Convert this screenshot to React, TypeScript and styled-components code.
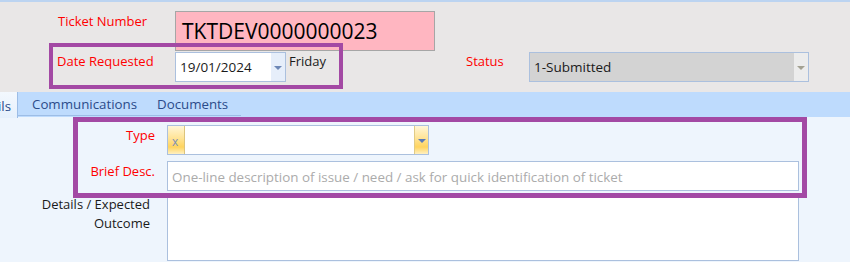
import React from "react";
import styled, { createGlobalStyle } from "styled-components";

const GlobalStyle = createGlobalStyle`
  html, body {
    margin: 0;
    padding: 0;
    background: #eef5fd;
  }
  body {
    font-family: "Open Sans", "Noto Sans", "DejaVu Sans", sans-serif;
    font-size: 13px;
    color: #1a1a1a;
  }
`;

const TicketForm: React.FC = () => {
  return (
    <Page>
      <Header>
        <TopRow>
          <FieldLabel $width={117} $offset={1}>Ticket Number</FieldLabel>
          <TicketBox>TKTDEV0000000023</TicketBox>
        </TopRow>
        <SecondRow>
          <Highlight $border={4}>
            <DateGroup>
              <FieldLabel $width={118} $offset={5}>Date Requested</FieldLabel>
              <DateInput>
                <InputText>19/01/2024</InputText>
                <DropButton $bg="#e6eefa">
                  <Arrow $color="#6d87b6" />
                </DropButton>
              </DateInput>
              <DayName>Friday</DayName>
            </DateGroup>
          </Highlight>
          <StatusLabel $width={63} $offset={9}>
            Status
          </StatusLabel>
          <StatusCombo>
            <InputText>1-Submitted</InputText>
            <DropButton $bg="#ececec">
              <Arrow $color="#a3a192" />
            </DropButton>
          </StatusCombo>
        </SecondRow>
      </Header>

      <TabStrip>
        <ActiveTab>
          <span>Details</span>
        </ActiveTab>
        <TabGroup>
          <Tab>Communications</Tab>
          <Tab>Documents</Tab>
        </TabGroup>
      </TabStrip>

      <Panel>
        <Highlight $border={5} $overlap>
          <FormGrid>
            <GridLabel>Type</GridLabel>
            <TypeCombo>
              <ClearCell>x</ClearCell>
              <TypeValue />
              <YellowDrop>
                <Arrow $color="#5b7bb8" />
              </YellowDrop>
            </TypeCombo>
            <GridLabel>Brief Desc.</GridLabel>
            <TextBox>
              <Placeholder>
                One-line description of issue / need / ask for quick identification of ticket
              </Placeholder>
            </TextBox>
          </FormGrid>
        </Highlight>
        <DetailsRow>
          <DetailsLabel>
            Details / Expected
            <br />
            Outcome
          </DetailsLabel>
          <TextArea />
        </DetailsRow>
      </Panel>
    </Page>
  );
};

export default function App() {
  return (
    <>
      <GlobalStyle />
      <TicketForm />
    </>
  );
}

// Styled Components
const Page = styled.div`
  width: 850px;
  height: 262px;
  overflow: hidden;
  background: #eef5fd;
`;

const Header = styled.div`
  background: #e9e7e7;
  border-top: 2px solid #bcd4f1;
  padding: 9px 0 3px 0;
`;

const TopRow = styled.div`
  display: flex;
  align-items: flex-start;
  padding-left: 58px;
`;

const FieldLabel = styled.div<{ $width: number; $offset: number }>`
  width: ${(p) => p.$width}px;
  flex-shrink: 0;
  margin-top: ${(p) => p.$offset}px;
  color: #ff0000;
  font-size: 13px;
  line-height: 18px;
  white-space: nowrap;
`;

const StatusLabel = styled(FieldLabel)`
  margin-left: 123px;
`;

const TicketBox = styled.div`
  width: 260px;
  height: 40px;
  box-sizing: border-box;
  display: flex;
  align-items: center;
  padding-left: 6px;
  background: #ffb6c1;
  border: 1px solid #a6a6a6;
  font-size: 21px;
  color: #000;
`;

const SecondRow = styled.div`
  display: flex;
  align-items: flex-start;
  padding-left: 49px;
  margin-top: -8px;
  position: relative;
`;

const Highlight = styled.div<{ $border: number; $overlap?: boolean }>`
  border: ${(p) => p.$border}px solid #a349a4;
  position: relative;
  z-index: 1;
  ${(p) => (p.$overlap ? "margin: -1px 43px 0 73px;" : "")}
`;

const DateGroup = styled.div`
  display: flex;
  align-items: flex-start;
  width: 286px;
  height: 38px;
  padding-left: 4px;
  box-sizing: border-box;
`;

const DateInput = styled.div`
  margin-top: 5px;
  width: 111px;
  height: 30px;
  box-sizing: border-box;
  display: flex;
  background: #fff;
  border: 1px solid #abc0de;
`;

const InputText = styled.div`
  flex: 1;
  display: flex;
  align-items: center;
  padding-left: 4px;
  font-size: 13.5px;
  color: #1a1a1a;
  white-space: nowrap;
`;

const DropButton = styled.div<{ $bg: string }>`
  width: 14px;
  background: ${(p) => p.$bg};
  display: flex;
  align-items: center;
  justify-content: center;
  padding-top: 2px;
`;

const Arrow = styled.span<{ $color: string }>`
  width: 0;
  height: 0;
  border-left: 4px solid transparent;
  border-right: 4px solid transparent;
  border-top: 4px solid ${(p) => p.$color};
`;

const DayName = styled.div`
  margin: 5px 0 0 3px;
  font-size: 13px;
  line-height: 18px;
  color: #1a1a1a;
`;

const StatusCombo = styled.div`
  margin-top: 9px;
  width: 280px;
  height: 30px;
  box-sizing: border-box;
  display: flex;
  background: #d3d3d3;
  border: 1px solid #abc0de;
`;

const TabStrip = styled.div`
  height: 25px;
  display: flex;
  background: #bedbfd;
  border-bottom: 1px solid #a6c4ea;
`;

const ActiveTab = styled.div`
  width: 18px;
  flex-shrink: 0;
  overflow: hidden;
  display: flex;
  justify-content: flex-end;
  align-items: center;
  padding: 1px 6px 0 0;
  box-sizing: border-box;
  background: linear-gradient(#f3f8fe, #e6f0fc);
  border-right: 1px solid #9dbde6;
  color: #2b4b8a;
  font-size: 13.3px;
  margin-bottom: -1px;
  span {
    white-space: nowrap;
  }
`;

const TabGroup = styled.div`
  display: flex;
  align-items: center;
  height: 23px;
  padding: 0 3px 0 4px;
  border-bottom: 1px solid #9dbde6;
`;

const Tab = styled.div`
  padding: 0 10px;
  color: #2b4b8a;
  font-size: 13.3px;
  white-space: nowrap;
`;

const Panel = styled.div`
  background: #eef5fd;
`;

const FormGrid = styled.div`
  display: grid;
  grid-template-columns: 77px 1fr;
  column-gap: 12px;
  row-gap: 6px;
  padding: 3px 3px 2px 0;
`;

const GridLabel = styled.div`
  text-align: right;
  color: #ff0000;
  line-height: 18px;
  padding-top: 1px;
  white-space: nowrap;
`;

const TypeCombo = styled.div`
  width: 262px;
  height: 30px;
  box-sizing: border-box;
  display: flex;
  background: #fff;
  border: 1px solid #abc0de;
`;

const yellowFill = `linear-gradient(#fff6d8 0%, #ffe394 45%, #ffd45e 75%, #fff0c2 100%)`;

const ClearCell = styled.div`
  width: 17px;
  background: ${yellowFill};
  border-right: 1px solid #dcc47c;
  color: #7c8fb5;
  font-size: 12px;
  display: flex;
  align-items: flex-end;
  padding: 0 0 4px 4px;
  box-sizing: border-box;
`;

const TypeValue = styled.div`
  flex: 1;
`;

const YellowDrop = styled.div`
  width: 13px;
  background: ${yellowFill};
  border-left: 1px solid #e0cb86;
  display: flex;
  align-items: center;
  justify-content: center;
  padding-top: 2px;
`;

const TextBox = styled.div`
  height: 30px;
  box-sizing: border-box;
  display: flex;
  align-items: center;
  padding: 1px 0 0 4px;
  background: #fff;
  border: 1px solid #abc0de;
`;

const Placeholder = styled.span`
  color: #ababab;
  font-size: 13.4px;
  white-space: nowrap;
`;

const DetailsRow = styled.div`
  display: grid;
  grid-template-columns: 150px 632px;
  column-gap: 17px;
  margin-top: -1px;
`;

const DetailsLabel = styled.div`
  text-align: right;
  line-height: 19px;
  margin-top: -2px;
  color: #1a1a1a;
`;

const TextArea = styled.div`
  height: 64px;
  box-sizing: border-box;
  background: #fff;
  border: 1px solid #abc0de;
`;
